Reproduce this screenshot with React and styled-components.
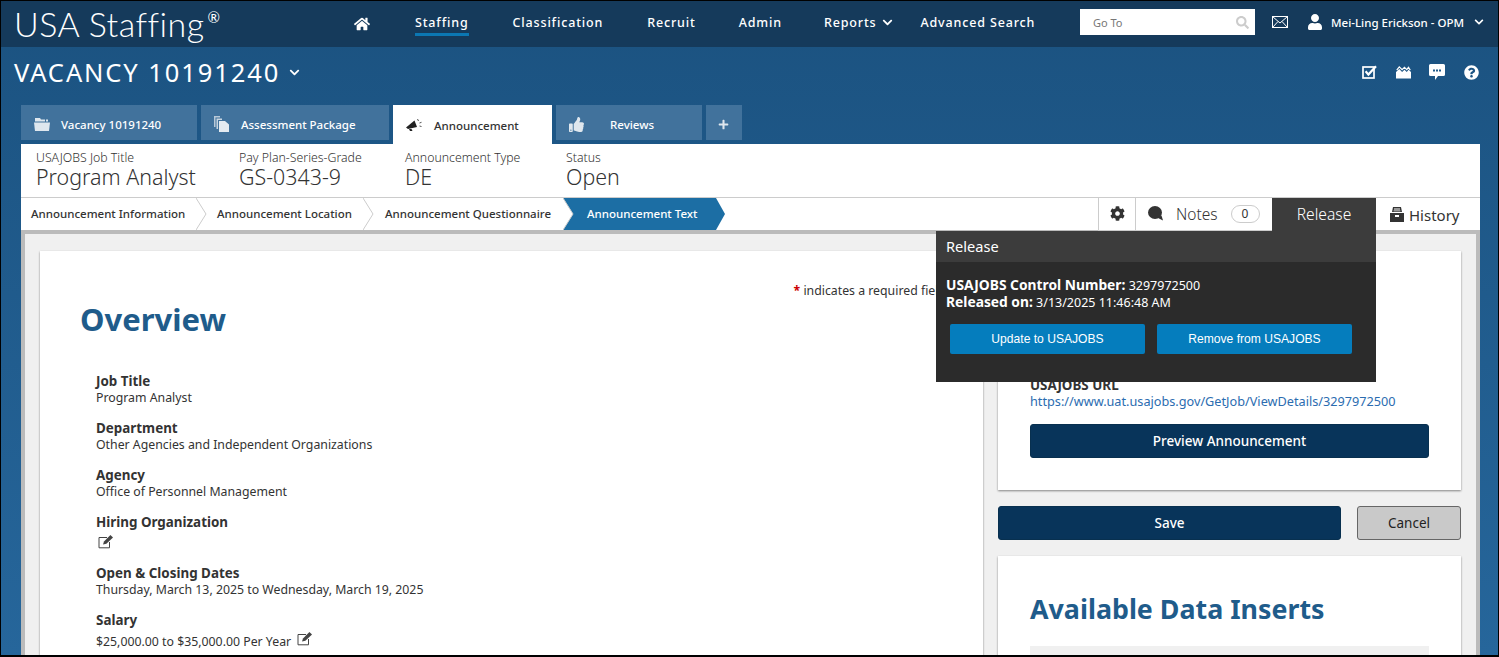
import React from 'react';
import styled, { createGlobalStyle } from 'styled-components';
import {
  FaHome,
  FaThumbsUp,
  FaPlus,
  FaCog,
  FaSearch,
  FaChevronDown,
  FaUser,
  FaQuestionCircle,
} from 'react-icons/fa';

const GlobalStyle = createGlobalStyle`
  html, body {
    margin: 0;
    padding: 0;
    background: #000;
  }
  * {
    box-sizing: border-box;
  }
`;

const Page = styled.div`
  width: 1499px;
  height: 657px;
  overflow: hidden;
  position: relative;
  border: 1px solid #000;
  border-bottom-width: 2px;
  background: linear-gradient(180deg, #1b5280 0%, #26669b 100%);
  font-family: 'Noto Sans', 'Open Sans', sans-serif;
  color: #333;
  font-size: 12.3px;
`;

const TopBar = styled.header`
  height: 46px;
  background: #153a5b;
  display: flex;
  align-items: center;
  color: #fff;
`;

const Logo = styled.div`
  width: 339px;
  padding-left: 13px;
  font-family: 'Lato', sans-serif;
  font-weight: 300;
  font-size: 34px;
  letter-spacing: 0.45px;
  line-height: 46px;
  sup {
    font-size: 15px;
    font-weight: 400;
    vertical-align: 14px;
    line-height: 0;
    letter-spacing: 0;
    margin-left: 3px;
  }
`;

const Nav = styled.nav`
  display: flex;
  align-items: center;
  width: 740px;
  padding-left: 14px;
`;

const NavItem = styled.a`
  font-size: 12.5px;
  font-weight: 500;
  letter-spacing: 0.85px;
  color: #fff;
  margin-left: ${(props) => props.$gap}px;
  padding-bottom: 2px;
  margin-top: 1px;
  border-bottom: 3px solid ${(props) => (props.$active ? '#0b77b3' : 'transparent')};
  display: flex;
  align-items: center;
  gap: 6px;
  white-space: nowrap;
`;

const GoTo = styled.div`
  width: 175px;
  height: 26px;
  margin-top: -4px;
  background: #fff;
  display: flex;
  align-items: center;
  justify-content: space-between;
  padding: 0 6px 0 13px;
  color: #777;
  font-size: 11px;
`;

const UserArea = styled.div`
  display: flex;
  align-items: center;
  margin-left: 17px;
  margin-top: -4px;
  font-size: 11.5px;
  font-weight: 500;
  white-space: nowrap;
`;

const UserIcon = styled.span`
  display: flex;
  margin-left: 19px;
`;

const UserName = styled.span`
  margin-left: 8px;
  margin-right: 11px;
  width: 132px;
`;

const TitleRow = styled.div`
  height: 58px;
  display: flex;
  align-items: center;
  justify-content: space-between;
  padding: 0 19px 8px 13px;
  color: #fff;
`;

const Title = styled.h1`
  margin: 0;
  font-size: 25.5px;
  font-weight: 400;
  letter-spacing: 1.9px;
  display: flex;
  align-items: center;
  gap: 9px;
`;

const TitleIcons = styled.div`
  display: flex;
  align-items: center;
  gap: 18px;
  svg:first-child {
    margin-right: 1px;
  }
  svg:last-child {
    margin-left: 1px;
  }
`;

const Tabs = styled.div`
  display: flex;
  gap: 4px;
  margin-left: 20px;
  height: 39px;
`;

const Tab = styled.div`
  width: ${(props) => props.$width}px;
  height: ${(props) => (props.$active ? 39 : 35)}px;
  background: ${(props) => (props.$active ? '#fff' : '#41729c')};
  color: ${(props) => (props.$active ? '#333' : '#fff')};
  display: flex;
  align-items: ${(props) => (props.$active ? 'flex-start' : 'center')};
  padding: ${(props) => (props.$active ? '13px' : '3px')} 0 0 ${(props) => props.$pad || 13}px;
  font-size: 11.5px;
  font-weight: 500;
  white-space: nowrap;
  svg {
    flex-shrink: 0;
  }
  span {
    margin-left: ${(props) => props.$textGap}px;
  }
`;

const Panel = styled.div`
  margin: 0 18px 0 20px;
  background: #fff;
`;

const InfoRow = styled.div`
  height: 54px;
  display: flex;
  padding: 6px 0 0 15px;
  border-bottom: 1px solid #ccc;
`;

const InfoCol = styled.div`
  width: ${(props) => props.$width}px;
`;

const InfoLabel = styled.div`
  font-size: 12.3px;
  font-weight: 300;
  line-height: 15px;
`;

const InfoValue = styled.div`
  font-size: 21.4px;
  font-weight: 300;
  line-height: 23px;
`;

const StepRow = styled.div`
  height: 32px;
  display: flex;
  justify-content: space-between;
  background: #fff;
`;

const Steps = styled.div`
  display: flex;
`;

const Step = styled.div`
  position: relative;
  width: ${(props) => props.$width}px;
  height: 32px;
  padding: 0 0 2px ${(props) => props.$pad}px;
  display: flex;
  align-items: center;
  font-size: 11.5px;
  font-weight: 500;
  white-space: nowrap;
  background: ${(props) => (props.$active ? '#1c6ea4' : 'transparent')};
  color: ${(props) => (props.$active ? '#fff' : '#333')};
  svg {
    position: absolute;
    left: 100%;
    top: 0;
    z-index: 1;
  }
`;

const Actions = styled.div`
  display: flex;
`;

const ActionCell = styled.div`
  width: ${(props) => props.$width}px;
  height: 33px;
  border-left: 1px solid #ccc;
  border-bottom: 1px solid #ccc;
  display: flex;
  align-items: center;
  justify-content: ${(props) => (props.$center ? 'center' : 'flex-start')};
  padding: 0 0 1px ${(props) => (props.$center ? 0 : 12)}px;
  font-size: 15.5px;
  font-weight: 300;
  gap: 13px;
`;

const Badge = styled.span`
  width: 29px;
  height: 18px;
  border: 1px solid #ccc;
  border-radius: 9px;
  font-size: 12px;
  font-weight: 400;
  display: flex;
  align-items: center;
  justify-content: center;
`;

const ReleaseTab = styled.div`
  width: 104px;
  height: 33px;
  background: #3c3c3c;
  color: #fff;
  font-size: 15.6px;
  font-weight: 300;
  display: flex;
  align-items: center;
  justify-content: center;
  padding-bottom: 1px;
`;

const HistoryCell = styled.div`
  width: 104px;
  height: 33px;
  display: flex;
  align-items: center;
  padding: 0 0 0 14px;
  font-size: 15px;
  font-weight: 400;
  gap: 5px;
`;

const Workspace = styled.div`
  border: 4px solid #bbb;
  border-bottom: none;
  background: #f0f0f0;
  padding: 17px 15px 0 15px;
  height: 431px;
  display: flex;
  gap: 15px;
  overflow: hidden;
`;

const Card = styled.div`
  background: #fff;
  box-shadow: 0 1px 2px rgba(0, 0, 0, 0.45);
`;

const MainCard = styled(Card)`
  width: 943px;
  flex-shrink: 0;
  padding: 32px 0 0 40px;
`;

const Required = styled.div`
  text-align: right;
  padding-right: 37px;
  line-height: 16px;
  b {
    color: #c00;
  }
`;

const Heading = styled.h2`
  margin: 0;
  font-size: 31px;
  font-weight: 700;
  color: #1f5c8b;
  line-height: 40px;
`;

const Fields = styled.div`
  padding: 34px 0 0 16px;
`;

const Field = styled.div`
  margin-bottom: 14px;
`;

const FieldLabel = styled.div`
  font-size: 13.4px;
  font-weight: 700;
  line-height: 17px;
`;

const FieldValue = styled.div`
  line-height: 16px;
  height: ${(props) => props.$height || 16}px;
  display: flex;
  align-items: center;
  gap: 4px;
`;

const EditSlot = styled.span`
  display: flex;
  margin: ${(props) => props.$margin};
`;

const Side = styled.div`
  width: 463px;
  flex-shrink: 0;
`;

const ReleaseCard = styled(Card)`
  height: 239px;
  padding: 126px 32px 0 32px;
`;

const UrlLabel = styled.div`
  font-size: 13.4px;
  font-weight: 700;
  line-height: 16px;
`;

const UrlLink = styled.a`
  display: block;
  color: #2b6cb0;
  line-height: 16px;
  font-size: 12.7px;
`;

const DarkButton = styled.button`
  display: block;
  width: ${(props) => props.$width || '100%'};
  height: 34px;
  border: 1px solid #08304f;
  border-radius: 3px;
  background: #08345a;
  color: #fff;
  font-family: inherit;
  font-size: 13.5px;
  font-weight: 500;
  margin-top: ${(props) => props.$top || 0}px;
`;

const ButtonRow = styled.div`
  display: flex;
  justify-content: space-between;
  margin: 16px 0;
`;

const CancelButton = styled.button`
  width: 104px;
  height: 34px;
  border: 1px solid #666;
  border-radius: 3px;
  background: #c9c9c9;
  color: #222;
  font-family: inherit;
  font-size: 13.5px;
`;

const InsertsCard = styled(Card)`
  height: 200px;
  padding: 33px 32px 0 32px;
`;

const InsertsHeading = styled(Heading)`
  font-size: 26.8px;
`;

const InsertsBox = styled.div`
  height: 60px;
  margin-top: 17px;
  background: #f0f0f0;
`;

const Popover = styled.div`
  position: absolute;
  left: 935px;
  top: 230px;
  width: 440px;
  height: 151px;
  background: #2b2b2b;
  color: #fff;
  z-index: 5;
`;

const PopoverTitle = styled.div`
  height: 31px;
  background: #3c3c3c;
  padding: 0 10px;
  font-size: 14.6px;
  line-height: 30px;
`;

const PopoverBody = styled.div`
  padding: 14px 10px 0;
  font-size: 12.5px;
`;

const PopoverLine = styled.div`
  height: 17px;
  line-height: 17px;
  white-space: nowrap;
  b {
    font-size: 13.8px;
    font-weight: 700;
  }
`;

const PopoverButtons = styled.div`
  display: flex;
  gap: 12px;
  margin: 14px 0 0 4px;
`;

const BlueButton = styled.button`
  width: 195px;
  height: 30px;
  border: none;
  border-radius: 2px;
  background: #057dbd;
  color: #fff;
  font-family: 'Liberation Sans', Arial, sans-serif;
  font-size: 12.1px;
`;

const MailIcon = () => (
  <svg width="16" height="12" viewBox="0 0 16 12" fill="none" stroke="#fff" strokeWidth="1">
    <rect x="0.5" y="0.5" width="15" height="11" />
    <path d="M0.5 0.5 8 7l7.5-6.5M0.5 11.5 6 5.5M15.5 11.5 10 5.5" />
  </svg>
);

const CheckSquareIcon = () => (
  <svg width="15" height="14" viewBox="0 0 15 14" fill="none">
    <rect x="1" y="2" width="11" height="11" stroke="#fff" strokeWidth="1.7" />
    <path d="M3.6 6.2 6.4 9.6 14 1.2" stroke="#fff" strokeWidth="2.2" />
  </svg>
);

const InboxIcon = () => (
  <svg width="15" height="14" viewBox="0 0 16 14" fill="#fff">
    <path d="M0.8 5 3.5 1.5 6.5 4.5 9 2l2.5 2.5L13.3 2 15.2 5" fill="none" stroke="#fff" strokeWidth="1.3" />
    <path d="M0 7 3.5 3.8 6.5 7 9 4.5 11.5 7 13.4 4.5 16 7v7H0z" />
  </svg>
);

const ChatDotsIcon = () => (
  <svg width="16" height="16" viewBox="0 0 16 16" fill="#fff">
    <path d="M1.5 0h13A1.5 1.5 0 0 1 16 1.5v9a1.5 1.5 0 0 1-1.5 1.5H9l-3 4v-4H1.5A1.5 1.5 0 0 1 0 10.5v-9A1.5 1.5 0 0 1 1.5 0z" />
    <path d="M4 5.5h2v2H4zM7 5.5h2v2H7zM10 5.5h2v2h-2z" fill="#1f5a8a" />
  </svg>
);

const FolderIcon = () => (
  <svg width="16" height="13" viewBox="0 0 16 13" fill="#dfe7ee">
    <path d="M1 0h5l1 1.5h4v2H1zM12 1.5h2v2h-2z" />
    <path d="M0 4.5h16l-1 8.5H1z" />
  </svg>
);

const PagesIcon = () => (
  <svg width="15" height="16" viewBox="0 0 15 16">
    <path d="M0 0h6v1.5H1.5V11H0z" fill="#b9c9d8" />
    <path d="M2.5 2.5H8V4H4v9H2.5z" fill="#c9d6e1" />
    <path d="M5 5h6l4 3.5V16H5z" fill="#e4ebf1" />
  </svg>
);

const HornIcon = () => (
  <svg width="16" height="13" viewBox="0 0 16 13">
    <path d="M0 9.5 8.5 2.5 11 9 2 11z" fill="#222" />
    <path d="M3 11h2.5l1 2H4z" fill="#222" />
    <path d="M11.5 1 12.5 3M13.5 5 15.5 4.3M13.5 8 15.5 8.5" stroke="#555" strokeWidth="1" fill="none" />
  </svg>
);

const NoteBubbleIcon = () => (
  <svg width="15" height="15" viewBox="0 0 15 15" fill="#333">
    <ellipse cx="7" cy="6.5" rx="7" ry="6.5" />
    <path d="M9 11.5 13.5 9.5 15 14.5z" />
  </svg>
);

const EditIcon = () => (
  <svg width="16" height="15" viewBox="0 0 16 15" fill="none">
    <path d="M9 3.5H1v10.3h10.5V8" stroke="#444" strokeWidth="1" />
    <path d="M5 10.6 6 7.6 12.4 1l2.6 2.4-6.6 6.4z" fill="#444" />
  </svg>
);

const ArchiveIcon = () => (
  <svg width="14" height="15" viewBox="0 0 14 15" fill="#333">
    <path d="M3 0h8l1 5H2zM4 1.5v1h6v-1zM3.6 3.5v.8h6.8v-.8z" fillRule="evenodd" />
    <path d="M0 6h14v9H0zM5 8v2h4V8z" fillRule="evenodd" />
  </svg>
);

const StepArrow = ({ active }) => (
  <svg width="11" height="32" viewBox="0 0 11 32">
    {active ? (
      <path d="M0 0 9 16 0 32z" fill="#1c6ea4" />
    ) : (
      <path d="M0 0 10 16 0 32" fill="#fff" stroke="#ccc" strokeWidth="1" />
    )}
  </svg>
);

const fields = [
  ['Job Title', 'Program Analyst'],
  ['Department', 'Other Agencies and Independent Organizations'],
  ['Agency', 'Office of Personnel Management'],
];

export default function App() {
  return (
    <Page>
      <GlobalStyle />
      <TopBar>
        <Logo>
          USA Staffing<sup>®</sup>
        </Logo>
        <Nav>
          <FaHome size={16} />
          <NavItem $gap={45} $active>Staffing</NavItem>
          <NavItem $gap={44}>Classification</NavItem>
          <NavItem $gap={44}>Recruit</NavItem>
          <NavItem $gap={43}>Admin</NavItem>
          <NavItem $gap={42}>
            Reports <FaChevronDown size={11} />
          </NavItem>
          <NavItem $gap={27}>Advanced Search</NavItem>
        </Nav>
        <GoTo>
          Go To
          <FaSearch size={13} color="#ccc" />
        </GoTo>
        <UserArea>
          <MailIcon />
          <UserIcon>
            <FaUser size={16} />
          </UserIcon>
          <UserName>Mei-Ling Erickson - OPM</UserName>
          <FaChevronDown size={10} />
        </UserArea>
      </TopBar>

      <TitleRow>
        <Title>
          VACANCY 10191240 <FaChevronDown size={11} />
        </Title>
        <TitleIcons>
          <CheckSquareIcon />
          <InboxIcon />
          <ChatDotsIcon />
          <FaQuestionCircle size={15} />
        </TitleIcons>
      </TitleRow>

      <Tabs>
        <Tab $width={176} $textGap={11}>
          <FolderIcon />
          <span>Vacancy 10191240</span>
        </Tab>
        <Tab $width={188} $textGap={12}>
          <PagesIcon />
          <span>Assessment Package</span>
        </Tab>
        <Tab $width={159} $textGap={12} $active>
          <HornIcon />
          <span>Announcement</span>
        </Tab>
        <Tab $width={146} $textGap={26}>
          <FaThumbsUp size={15} color="#dfe7ee" />
          <span>Reviews</span>
        </Tab>
        <Tab $width={36} $textGap={0} $pad={12}>
          <FaPlus size={11} color="#dfe7ee" />
        </Tab>
      </Tabs>

      <Panel>
        <InfoRow>
          <InfoCol $width={203}>
            <InfoLabel>USAJOBS Job Title</InfoLabel>
            <InfoValue>Program Analyst</InfoValue>
          </InfoCol>
          <InfoCol $width={166}>
            <InfoLabel>Pay Plan-Series-Grade</InfoLabel>
            <InfoValue>GS-0343-9</InfoValue>
          </InfoCol>
          <InfoCol $width={161}>
            <InfoLabel>Announcement Type</InfoLabel>
            <InfoValue>DE</InfoValue>
          </InfoCol>
          <InfoCol $width={100}>
            <InfoLabel>Status</InfoLabel>
            <InfoValue>Open</InfoValue>
          </InfoCol>
        </InfoRow>

        <StepRow>
          <Steps>
            <Step $width={175} $pad={10}>
              Announcement Information
              <StepArrow />
            </Step>
            <Step $width={167} $pad={21}>
              Announcement Location
              <StepArrow />
            </Step>
            <Step $width={200} $pad={22}>
              Announcement Questionnaire
              <StepArrow />
            </Step>
            <Step $width={153} $pad={24} $active>
              Announcement Text
              <StepArrow active />
            </Step>
          </Steps>
          <Actions>
            <ActionCell $width={37} $center>
              <FaCog size={15} />
            </ActionCell>
            <ActionCell $width={137}>
              <NoteBubbleIcon />
              Notes
              <Badge>0</Badge>
            </ActionCell>
            <ReleaseTab>Release</ReleaseTab>
            <HistoryCell>
              <ArchiveIcon />
              History
            </HistoryCell>
          </Actions>
        </StepRow>

        <Workspace>
          <MainCard>
            <Required>
              <b>*</b> indicates a required field
            </Required>
            <Heading>Overview</Heading>
            <Fields>
              {fields.map(([label, value]) => (
                <Field key={label}>
                  <FieldLabel>{label}</FieldLabel>
                  <FieldValue>{value}</FieldValue>
                </Field>
              ))}
              <Field>
                <FieldLabel>Hiring Organization</FieldLabel>
                <FieldValue $height={20}>
                  <EditSlot $margin="0 0 0 2px">
                    <EditIcon />
                  </EditSlot>
                </FieldValue>
              </Field>
              <Field>
                <FieldLabel>Open &amp; Closing Dates</FieldLabel>
                <FieldValue>Thursday, March 13, 2025 to Wednesday, March 19, 2025</FieldValue>
              </Field>
              <Field>
                <FieldLabel>Salary</FieldLabel>
                <FieldValue $height={25}>
                  $25,000.00 to $35,000.00 Per Year
                  <EditSlot $margin="-6px 0 0 2px">
                    <EditIcon />
                  </EditSlot>
                </FieldValue>
              </Field>
            </Fields>
          </MainCard>

          <Side>
            <ReleaseCard>
              <UrlLabel>USAJOBS URL</UrlLabel>
              <UrlLink>https://www.uat.usajobs.gov/GetJob/ViewDetails/3297972500</UrlLink>
              <DarkButton $top={15}>Preview Announcement</DarkButton>
            </ReleaseCard>
            <ButtonRow>
              <DarkButton $width="343px">Save</DarkButton>
              <CancelButton>Cancel</CancelButton>
            </ButtonRow>
            <InsertsCard>
              <InsertsHeading>Available Data Inserts</InsertsHeading>
              <InsertsBox />
            </InsertsCard>
          </Side>
        </Workspace>
      </Panel>

      <Popover>
        <PopoverTitle>Release</PopoverTitle>
        <PopoverBody>
          <PopoverLine>
            <b>USAJOBS Control Number:</b> 3297972500
          </PopoverLine>
          <PopoverLine>
            <b>Released on:</b> 3/13/2025 11:46:48 AM
          </PopoverLine>
          <PopoverButtons>
            <BlueButton>Update to USAJOBS</BlueButton>
            <BlueButton>Remove from USAJOBS</BlueButton>
          </PopoverButtons>
        </PopoverBody>
      </Popover>
    </Page>
  );
}
